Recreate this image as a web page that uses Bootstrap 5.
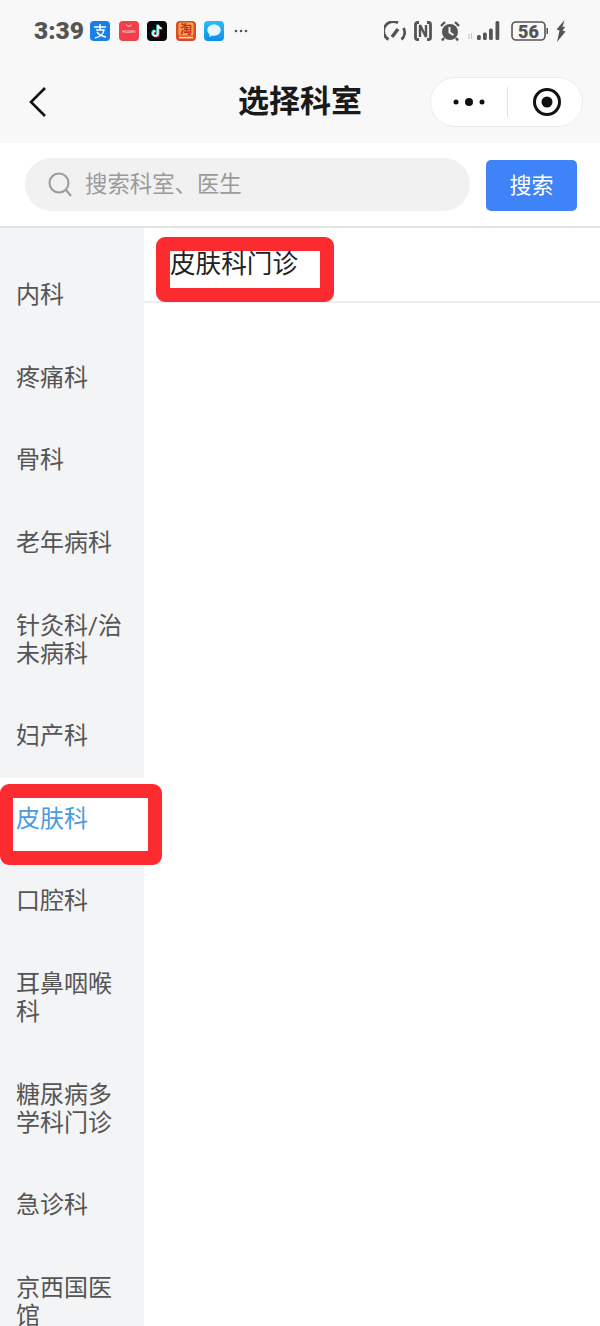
<!DOCTYPE html>
<html lang="zh-CN">
<head>
    <meta charset="UTF-8">
    <meta name="viewport" content="width=device-width, initial-scale=1.0">
    <title>选择科室</title>
    <link href="https://cdn.jsdelivr.net/npm/bootstrap@5.3.0/dist/css/bootstrap.min.css" rel="stylesheet">
    <style>
        html, body {
            height: 1326px;
            overflow: hidden;
        }
        body {
            font-family: "Roboto", "Noto Sans CJK SC", sans-serif;
            background: #fff;
            color: #222;
        }
        .status-bar {
            height: 60px;
            background: #f8f8f8;
            padding: 2px 34px 0 34px;
            color: #555;
        }
        .status-time {
            font-size: 24.5px;
            font-weight: 900;
            line-height: 1;
            width: 56px;
        }
        .app-icons { gap: 8.6px; }
        .app-icon { width: 20px; height: 20px; display: block; }
        .more-dots { margin-left: 10px; width: 14px; height: 4px; }
        .sys-icons { gap: 8px; }
        .top-nav {
            height: 83px;
            background: #f8f8f8;
            padding: 0 17px 0 28px;
        }
        .back-icon { width: 20px; height: 32px; }
        .page-title {
            font-size: 31px;
            font-weight: 700;
            line-height: 1;
            color: #1a1a1a;
            margin: 0;
            left: 0;
            right: 0;
            top: 26px;
            text-align: center;
        }
        .capsule {
            width: 153px;
            height: 50px;
            background: #fff;
            border: 1px solid #ececec;
            border-radius: 25px;
        }
        .capsule-part { width: 76px; }
        .capsule-part-end { width: 74px; padding-left: 3px; }
        .capsule-line { width: 1px; height: 30px; background: #e2e2e2; }
        .search-row {
            height: 85px;
            padding: 0 23px 0 25px;
            border-bottom: 2px solid #e2e2e2;
        }
        .search-box {
            width: 445px;
            height: 53px;
            background: #f1f1f1;
            border-radius: 27px;
            padding-left: 23px;
            font-size: 22.4px;
            color: #9a9a9a;
            gap: 13px;
        }
        .search-btn {
            width: 91px;
            height: 51px;
            margin-top: 2px;
            background: #3f83f8;
            border: 0;
            border-radius: 5px;
            color: #fff;
            font-size: 22px;
            padding: 0;
        }
        .dept-wrap { height: 1098px; }
        .dept-side {
            width: 144px;
            flex: none;
            background: #f3f4f6;
            padding-top: 26px;
            position: relative;
            z-index: 1;
        }
        .dept-item {
            padding: 27.3px 16px;
            font-size: 24px;
            line-height: 28px;
            color: #555;
            position: relative;
            z-index: 0;
        }
        .dept-item.is-active {
            color: #4a9be0;
            background: #fff;
        }
        .red-frame {
            position: absolute;
            z-index: -1;
            background: #fff;
            border: 14px solid #fb2b2f;
            border-radius: 9px;
        }
        .dept-item .red-frame {
            left: 0;
            top: 6px;
            width: 162px;
            height: 81px;
            border-left-width: 13px;
        }
        .clinic-list { min-width: 0; }
        .clinic-row {
            height: 75px;
            padding: 20px 26px 0;
            font-size: 25.6px;
            line-height: 32px;
            color: #222;
            border-bottom: 2px solid #eee;
            position: relative;
            z-index: 0;
        }
        .clinic-row .red-frame {
            left: 12px;
            top: 9px;
            width: 178px;
            height: 65px;
        }
    </style>
</head>
<body>
<div class="status-bar d-flex align-items-center justify-content-between">
    <div class="d-flex align-items-center">
        <span class="status-time">3:39</span>
        <div class="app-icons d-flex align-items-center">
            <svg class="app-icon" viewBox="0 0 20 20"><rect width="20" height="20" rx="4" fill="#1b7fe8"/><path d="M4 6h12M10 3v6M6 9h8q-1 6-9 8M7 11q3 4 9 5" fill="none" stroke="#fff" stroke-width="1.500"/></svg>
            <svg class="app-icon" viewBox="0 0 20 20"><rect width="20" height="20" rx="4" fill="#f0404c"/><path d="M7 3.500q3 3.500 6 0" fill="none" stroke="#ffd5d5" stroke-width="1"/><text x="10" y="12" font-size="3.600" font-family="Roboto" fill="#ffe0e0" text-anchor="middle">HUAWEI</text></svg>
            <svg class="app-icon" viewBox="0 0 20 20"><rect width="20" height="20" rx="4" fill="#08080c"/><path d="M11 4v8.500a2.500 2.500 0 1 1-2.500-2.500M11 4q.6 3 3.600 3.400" fill="none" stroke="#ff2c55" stroke-width="2" transform="translate(.7 .6)"/><path d="M11 4v8.500a2.500 2.500 0 1 1-2.500-2.500M11 4q.6 3 3.600 3.400" fill="none" stroke="#25f4ee" stroke-width="2" transform="translate(-.7 -.4)"/><path d="M11 4v8.500a2.500 2.500 0 1 1-2.500-2.500M11 4q.6 3 3.600 3.400" fill="none" stroke="#fff" stroke-width="1.300"/></svg>
            <svg class="app-icon" viewBox="0 0 20 20"><rect width="20" height="20" rx="4" fill="#dc4a26"/><rect x="2.500" y="1.500" width="15" height="13" rx="1.500" fill="#f2a548"/><text x="10" y="12.500" font-size="12" font-weight="700" font-family="Noto Sans CJK SC" fill="#c4261c" text-anchor="middle">淘</text><rect x="3" y="15.800" width="14" height="1.600" fill="#ffd9b0"/></svg>
            <svg class="app-icon" viewBox="0 0 20 20"><defs><linearGradient id="msgBg" x1="0" y1="0" x2="0" y2="1"><stop offset="0" stop-color="#2bbcf5"/><stop offset="1" stop-color="#0e8ee8"/></linearGradient></defs><rect width="20" height="20" rx="4" fill="url(#msgBg)"/><path d="M10 3.500c-3.900 0-6.700 2.500-6.700 5.600 0 1.800 1 3.300 2.400 4.300l-.4 2.600 2.700-1.500c.6.100 1.300.2 2 .2 3.900 0 6.700-2.400 6.700-5.600S13.900 3.500 10 3.500z" fill="#e8f7ff"/></svg>
        </div>
        <svg class="more-dots" viewBox="0 0 14 4"><circle cx="2" cy="2" r="1.300" fill="#555"/><circle cx="7" cy="2" r="1.300" fill="#555"/><circle cx="12" cy="2" r="1.300" fill="#555"/></svg>
    </div>
    <div class="sys-icons d-flex align-items-center">
        <svg width="22" height="20" viewBox="0 0 22 20" fill="none" stroke="#555" stroke-width="2.800"><path d="M4.500 18.500A9.500 9.500 0 0 1 14 1.800"/><path d="M19.500 7a9.500 9.500 0 0 1-2 11.500"/><path d="M8 16l6-8" stroke-width="3.500"/></svg>
        <svg width="18" height="20" viewBox="0 0 18 20" fill="none" stroke="#555" stroke-width="2.800"><path d="M5 1.500H3.500a2 2 0 0 0-2 2v13a2 2 0 0 0 2 2H5M13 1.500h1.500a2 2 0 0 1 2 2v13a2 2 0 0 1-2 2H13"/><path d="M6 16V4l6 12V4" stroke-width="2.400"/></svg>
        <svg width="20" height="20" viewBox="0 0 20 20"><circle cx="10" cy="11" r="8" fill="#555"/><path d="M9.500 6v5.500l4 2.500" fill="none" stroke="#f8f8f8" stroke-width="2"/><path d="M1 5l4-4M19 5l-4-4" stroke="#555" stroke-width="2.400"/><path d="M4 17l-2 2.500M16 17l2 2.500" stroke="#555" stroke-width="2.400"/></svg>
        <svg width="35" height="20" viewBox="0 0 35 20"><path d="M1 13v5M3.500 12v6" stroke="#c9c9c9" stroke-width="1.200"/><rect x="9" y="14" width="3.800" height="5" rx="1.500" fill="#555"/><rect x="15" y="11.500" width="3.800" height="7.500" rx="1.500" fill="#555"/><rect x="21" y="7.500" width="3.800" height="11.500" rx="1.500" fill="#555"/><rect x="27.500" y="0" width="3.800" height="19" rx="1.500" fill="#555"/></svg>
        <svg width="37" height="20" viewBox="0 0 37 20"><rect x="1" y="1" width="33" height="18" rx="4" fill="none" stroke="#555" stroke-width="1.600"/><rect x="35.500" y="7" width="1.500" height="6" fill="#555"/><text x="17.500" y="16.500" font-size="18" font-weight="900" font-family="Roboto" fill="#555" text-anchor="middle">56</text></svg>
        <svg width="10" height="22" viewBox="0 0 10 22"><path d="M8.500 0L.5 9.500l3 1L1 22l8.500-10.500-3-1L9.500 6.500l-3 .5z" fill="#555"/></svg>
    </div>
</div>

<div class="top-nav position-relative d-flex align-items-center justify-content-between">
    <svg class="back-icon" viewBox="0 0 20 32"><path d="M17 2L3 16l14 14" fill="none" stroke="#111" stroke-width="2.600"/></svg>
    <h1 class="page-title position-absolute">选择科室</h1>
    <div class="capsule d-flex align-items-center">
        <div class="capsule-part d-flex justify-content-center">
            <svg width="32" height="10" viewBox="0 0 32 10"><circle cx="3" cy="5" r="2.500" fill="#111"/><circle cx="16" cy="5" r="4" fill="#111"/><circle cx="29" cy="5" r="2.500" fill="#111"/></svg>
        </div>
        <div class="capsule-line"></div>
        <div class="capsule-part-end d-flex justify-content-center">
            <svg width="30" height="30" viewBox="0 0 30 30"><circle cx="15" cy="15" r="12.500" fill="none" stroke="#111" stroke-width="3"/><circle cx="15" cy="15" r="5.500" fill="#111"/></svg>
        </div>
    </div>
</div>

<div class="search-row d-flex align-items-center justify-content-between">
    <div class="search-box d-flex align-items-center">
        <svg width="24" height="26" viewBox="0 0 24 26" fill="none" stroke="#9a9a9a" stroke-width="2"><circle cx="11" cy="11" r="9.500"/><path d="M18 18l5 6"/></svg>
        <span>搜索科室、医生</span>
    </div>
    <button class="btn search-btn" type="button">搜索</button>
</div>

<div class="dept-wrap d-flex">
    <div class="dept-side" id="dept-side"></div>
    <div class="clinic-list flex-grow-1">
        <div class="clinic-row"><span class="red-frame"></span>皮肤科门诊</div>
    </div>
</div>

<script>
    const departments = ["内科", "疼痛科", "骨科", "老年病科", "针灸科/治未病科", "妇产科", "皮肤科", "口腔科", "耳鼻咽喉科", "糖尿病多学科门诊", "急诊科", "京西国医馆"];
    const activeDepartment = "皮肤科";

    const deptSide = document.getElementById("dept-side");
    departments.forEach(name => {
        const item = document.createElement("div");
        item.className = "dept-item";
        item.innerText = name;
        if (name === activeDepartment) {
            item.classList.add("is-active");
            const frame = document.createElement("span");
            frame.className = "red-frame";
            item.appendChild(frame);
        }
        deptSide.appendChild(item);
    });
</script>
<script src="https://cdn.jsdelivr.net/npm/bootstrap@5.3.0/dist/js/bootstrap.bundle.min.js"></script>
</body>
</html>
